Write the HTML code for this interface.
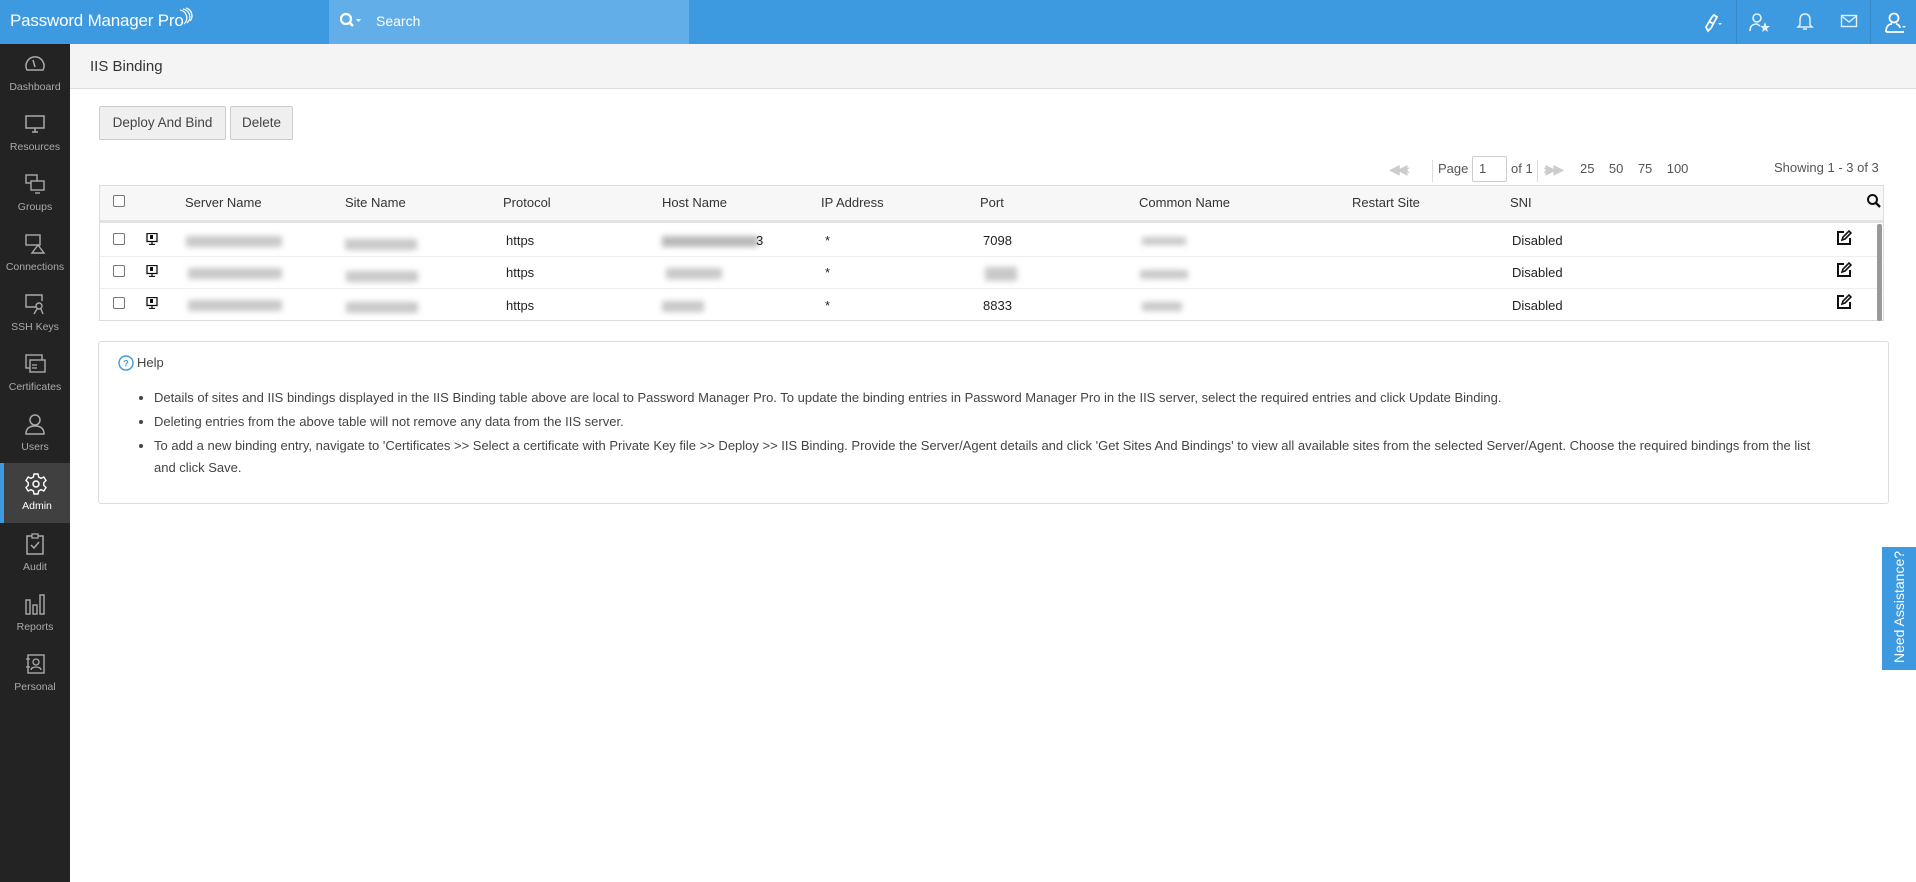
<!DOCTYPE html>
<html><head><meta charset="utf-8"><style>
*{box-sizing:border-box;margin:0;padding:0}
body{width:1916px;height:882px;overflow:hidden;background:#fff;font-family:"Liberation Sans",sans-serif;color:#333;position:relative}
.hdr{position:absolute;left:0;top:0;width:1916px;height:44px;background:#3d99e0}
.logo{position:absolute;left:10px;top:11px;color:#fff;font-size:17px;letter-spacing:-0.2px}
.search{position:absolute;left:329px;top:0;width:360px;height:44px;background:#62aee8;color:#fff;font-size:14px}
.search span{position:absolute;left:47px;top:13px}
.side{position:absolute;left:0;top:44px;width:70px;height:838px;background:#232323}
.item{position:absolute;left:0;width:70px;height:60px;text-align:center;color:#aaa;font-size:10.5px}
.item svg{position:absolute;left:24px;top:9px}
.item .l{position:absolute;left:0;right:0;top:37px}
.item.act{background:#404040;border-left:4px solid #3d99e0;color:#fff}
.item.act svg{left:20px}
.title{position:absolute;left:70px;top:44px;width:1846px;height:45px;background:#f4f4f4;border-bottom:1px solid #ddd;font-size:15px;color:#333}
.title span{position:absolute;left:20px;top:14px}
.btn{position:absolute;top:106px;height:34px;background:#efefef;border:1px solid #ccc;border-radius:2px;font-size:13.5px;color:#444;line-height:32px;text-align:center}
.pg{position:absolute;top:161px;font-size:13px;color:#555}
.th{position:absolute;top:185px;left:99px;width:1785px;height:38px;background:#f7f7f7;border:1px solid #ddd;border-bottom:3px solid #e3e3e3}
.tb{position:absolute;left:99px;top:223px;width:1785px;height:98px;border:1px solid #ddd;border-top:none}
.rl{position:absolute;left:100px;width:1783px;height:1px;background:#eee}
.t{position:absolute;font-size:13px;color:#222;white-space:nowrap}
.h{position:absolute;font-size:13px;color:#333;top:195px}
.cb{position:absolute;width:12px;height:12px;border:1px solid #777;border-radius:2px;background:#fff}
.bl{position:absolute;background:#c8c8c8;filter:blur(3px);height:11px}
.help{position:absolute;left:98px;top:341px;width:1791px;height:163px;border:1px solid #ddd;border-radius:3px}
.help ul{position:absolute;left:55px;top:45px;font-size:13px;color:#444;line-height:22px;white-space:nowrap}
.help li{margin-bottom:2px}
.need{position:absolute;left:1882px;top:547px;width:34px;height:123px;background:#3d99e0}
.need span{position:absolute;left:-44px;top:52px;width:122px;transform:rotate(-90deg);color:#fff;font-size:14px;text-align:center}
.ic{position:absolute;top:11px}
</style></head><body>
<div class="hdr">
<div class="logo">Password Manager Pro<svg width="16" height="20" viewBox="0 0 16 20" style="position:absolute;left:168px;top:-5px"><path d="M2 4 A8 8 0 0 1 6 18" stroke="#fff" fill="none" stroke-width="1.3"/><path d="M5 3 A8 8 0 0 1 9 17" stroke="#fff" fill="none" stroke-width="1.3"/><path d="M8 2 A8 8 0 0 1 12 15" stroke="#fff" fill="none" stroke-width="1.3"/></svg></div>
<div class="search"><svg width="24" height="20" style="position:absolute;left:10px;top:12px"><circle cx="7" cy="7" r="5" stroke="#fff" stroke-width="2.2" fill="none"/><line x1="11" y1="11" x2="14" y2="14" stroke="#fff" stroke-width="2.5"/><path d="M17 7 L22 7 L19.5 10Z" fill="#fff"/></svg><span>Search</span></div>
<div style="position:absolute;left:1736px;top:0;width:1px;height:44px;background:#3689c8"></div>
<div style="position:absolute;left:1870px;top:0;width:1px;height:44px;background:#3689c8"></div>
<svg class="ic" style="left:1700px" width="24" height="24"><path d="M8 20 L6 16 L12 6 L14 4 L17 6 L11 17Z M10 11 L14 13" stroke="#fff" stroke-width="1.8" fill="none"/><path d="M18 12 L22 12 L20 14Z" fill="#fff"/></svg>
<svg class="ic" style="left:1748px" width="24" height="24"><circle cx="9" cy="7" r="4" stroke="#e4f0fa" stroke-width="1.6" fill="none"/><path d="M2 20 C2 14 6 13 9 13 L12 15" stroke="#e4f0fa" stroke-width="1.6" fill="none"/><path d="M17 11 L18.5 15 L22 15 L19 17.5 L20 21 L17 19 L14 21 L15 17.5 L12 15 L15.5 15Z" fill="#e4f0fa"/></svg>
<svg class="ic" style="left:1795px" width="20" height="22"><path d="M10 3 C6 3 5 6 5 9 L5 14 L3 16 L17 16 L15 14 L15 9 C15 6 14 3 10 3Z M8 18 L12 18" stroke="#e4f0fa" stroke-width="1.5" fill="none"/></svg>
<svg class="ic" style="left:1840px;top:14px" width="20" height="16"><rect x="1.5" y="1.5" width="15" height="11" stroke="#e4f0fa" stroke-width="1.4" fill="none"/><path d="M1.5 2 L9 8 L16.5 2" stroke="#e4f0fa" stroke-width="1.4" fill="none"/></svg>
<svg class="ic" style="left:1884px" width="24" height="24"><circle cx="10" cy="7" r="4.5" stroke="#fff" stroke-width="1.8" fill="none"/><path d="M2 21 C2 14 6 13 8 13 M12 13 C14 13 16 15 16 17 M2 21 L20 21" stroke="#fff" stroke-width="1.8" fill="none"/><path d="M18 15 L22 15 L20 17Z" fill="#fff"/></svg>
</div>
<div class="side">
<div class="item" style="top:0"><svg width="22" height="22"><path d="M3 17 A9 9 0 1 1 19 17 Z" stroke="#aaa" stroke-width="1.5" fill="none"/><line x1="11" y1="14" x2="9" y2="7" stroke="#aaa" stroke-width="1.5"/></svg><div class="l">Dashboard</div></div>
<div class="item" style="top:60px"><svg width="22" height="22"><rect x="2" y="3" width="18" height="12" stroke="#aaa" stroke-width="1.5" fill="none"/><path d="M8 19 L14 19 M11 15 L11 19" stroke="#aaa" stroke-width="1.5"/></svg><div class="l">Resources</div></div>
<div class="item" style="top:120px"><svg width="22" height="22"><rect x="2" y="2" width="11" height="8" stroke="#aaa" stroke-width="1.4" fill="none"/><rect x="7" y="8" width="13" height="9" stroke="#aaa" stroke-width="1.4" fill="#232323"/><path d="M11 20 L16 20" stroke="#aaa" stroke-width="1.4"/></svg><div class="l">Groups</div></div>
<div class="item" style="top:180px"><svg width="22" height="22"><rect x="2" y="2" width="14" height="10" stroke="#aaa" stroke-width="1.4" fill="none"/><path d="M8 20 L20 20 L14 12 Z" stroke="#aaa" stroke-width="1.4" fill="none"/></svg><div class="l">Connections</div></div>
<div class="item" style="top:240px"><svg width="22" height="22"><path d="M12 14 L2 14 L2 2 L18 2 L18 8" stroke="#aaa" stroke-width="1.4" fill="none"/><circle cx="15" cy="13" r="3" stroke="#aaa" stroke-width="1.4" fill="none"/><path d="M13 16 L10 21 M17 16 L19 21" stroke="#aaa" stroke-width="1.4"/></svg><div class="l">SSH Keys</div></div>
<div class="item" style="top:300px"><svg width="22" height="22"><rect x="2" y="2" width="16" height="13" stroke="#aaa" stroke-width="1.4" fill="none"/><rect x="6" y="7" width="15" height="12" stroke="#aaa" stroke-width="1.4" fill="#232323"/><path d="M8 12 L13 12 M8 15 L13 15" stroke="#aaa" stroke-width="1.2"/></svg><div class="l">Certificates</div></div>
<div class="item" style="top:360px"><svg width="22" height="22"><circle cx="11" cy="7" r="5" stroke="#aaa" stroke-width="1.5" fill="none"/><path d="M2 21 C2 15 6 13 11 13 C16 13 20 15 20 21 Z" stroke="#aaa" stroke-width="1.5" fill="none"/></svg><div class="l">Users</div></div>
<div class="item act" style="top:419px"><svg width="24" height="24"><circle cx="12" cy="12" r="3" stroke="#fff" stroke-width="1.5" fill="none"/><path d="M10 2 L14 2 L14.6 5 L17 6.3 L19.8 5 L22 8.5 L19.8 10.5 L19.8 13.5 L22 15.5 L19.8 19 L17 17.7 L14.6 19 L14 22 L10 22 L9.4 19 L7 17.7 L4.2 19 L2 15.5 L4.2 13.5 L4.2 10.5 L2 8.5 L4.2 5 L7 6.3 L9.4 5Z" stroke="#fff" stroke-width="1.4" fill="none"/></svg><div class="l">Admin</div></div>
<div class="item" style="top:480px"><svg width="22" height="22"><rect x="3" y="3" width="16" height="18" stroke="#aaa" stroke-width="1.5" fill="none"/><rect x="8" y="1" width="6" height="4" stroke="#aaa" stroke-width="1.3" fill="#232323"/><path d="M7 12 L10 15 L15 9" stroke="#aaa" stroke-width="1.5" fill="none"/></svg><div class="l">Audit</div></div>
<div class="item" style="top:540px"><svg width="22" height="22"><rect x="2" y="7" width="4" height="14" stroke="#aaa" stroke-width="1.4" fill="none"/><rect x="9" y="12" width="4" height="9" stroke="#aaa" stroke-width="1.4" fill="none"/><rect x="16" y="2" width="4" height="19" stroke="#aaa" stroke-width="1.4" fill="none"/></svg><div class="l">Reports</div></div>
<div class="item" style="top:600px"><svg width="22" height="22"><rect x="4" y="2" width="16" height="18" stroke="#aaa" stroke-width="1.4" fill="none"/><circle cx="12" cy="9" r="3" stroke="#aaa" stroke-width="1.3" fill="none"/><path d="M7 17 C7 13 17 13 17 17" stroke="#aaa" stroke-width="1.3" fill="none"/><path d="M2 6 L6 6 M2 14 L6 14" stroke="#aaa" stroke-width="1.3"/></svg><div class="l">Personal</div></div>
</div>
<div class="title"><span>IIS Binding</span></div>
<div class="btn" style="left:99px;width:127px">Deploy And Bind</div>
<div class="btn" style="left:230px;width:63px">Delete</div>

<div class="pg" style="left:1389px;color:#ccc;font-size:14px;letter-spacing:-3px">◀◀ ‹</div>
<div style="position:absolute;left:1432px;top:160px;width:1px;height:22px;background:#ddd"></div>
<div class="pg" style="left:1438px">Page</div>
<div style="position:absolute;left:1472px;top:156px;width:35px;height:26px;border:1px solid #ccc;border-radius:2px;font-size:13px;color:#555;padding:4px 0 0 6px">1</div>
<div class="pg" style="left:1511px">of 1</div>
<div style="position:absolute;left:1537px;top:160px;width:1px;height:22px;background:#ddd"></div>
<div class="pg" style="left:1543px;color:#ccc;font-size:14px;letter-spacing:-3px">› ▶▶</div>
<div class="pg" style="left:1580px">25&nbsp;&nbsp;&nbsp;&nbsp;50&nbsp;&nbsp;&nbsp;&nbsp;75&nbsp;&nbsp;&nbsp;&nbsp;100</div>
<div class="pg" style="left:1774px;top:160px">Showing 1 - 3 of 3</div>

<div class="th"></div>
<div class="tb"></div>
<div class="rl" style="top:256px"></div>
<div class="rl" style="top:288px"></div>
<div style="position:absolute;left:1877px;top:224px;width:5px;height:97px;background:#999;border-radius:2px"></div>
<div class="cb" style="left:113px;top:195px"></div>
<div class="h" style="left:185px">Server Name</div>
<div class="h" style="left:345px">Site Name</div>
<div class="h" style="left:503px">Protocol</div>
<div class="h" style="left:662px">Host Name</div>
<div class="h" style="left:821px">IP Address</div>
<div class="h" style="left:980px">Port</div>
<div class="h" style="left:1139px">Common Name</div>
<div class="h" style="left:1352px">Restart Site</div>
<div class="h" style="left:1510px">SNI</div>
<svg style="position:absolute;left:1866px;top:193px" width="16" height="16"><circle cx="6.5" cy="6.5" r="4.5" stroke="#111" stroke-width="2" fill="none"/><line x1="10" y1="10" x2="14" y2="14" stroke="#111" stroke-width="2.4"/></svg>

<div class="cb" style="left:113px;top:233px"></div>
<div class="cb" style="left:113px;top:265px"></div>
<div class="cb" style="left:113px;top:297px"></div>
<svg style="position:absolute;left:146px;top:233px" width="12" height="12"><rect x="1" y="0.5" width="10" height="8" fill="none" stroke="#111" stroke-width="1.3"/><rect x="4" y="2" width="3" height="4" fill="#111"/><path d="M6 9 L6 11 M3 11.5 L9 11.5" stroke="#111" stroke-width="1.3"/></svg>
<svg style="position:absolute;left:146px;top:265px" width="12" height="12"><rect x="1" y="0.5" width="10" height="8" fill="none" stroke="#111" stroke-width="1.3"/><rect x="4" y="2" width="3" height="4" fill="#111"/><path d="M6 9 L6 11 M3 11.5 L9 11.5" stroke="#111" stroke-width="1.3"/></svg>
<svg style="position:absolute;left:146px;top:297px" width="12" height="12"><rect x="1" y="0.5" width="10" height="8" fill="none" stroke="#111" stroke-width="1.3"/><rect x="4" y="2" width="3" height="4" fill="#111"/><path d="M6 9 L6 11 M3 11.5 L9 11.5" stroke="#111" stroke-width="1.3"/></svg>

<div class="bl" style="left:186px;top:236px;width:96px"></div>
<div class="bl" style="left:188px;top:268px;width:94px"></div>
<div class="bl" style="left:188px;top:300px;width:94px"></div>
<div class="bl" style="left:345px;top:239px;width:72px"></div>
<div class="bl" style="left:346px;top:271px;width:72px"></div>
<div class="bl" style="left:346px;top:302px;width:72px"></div>
<div class="t" style="left:506px;top:233px">https</div>
<div class="t" style="left:506px;top:265px">https</div>
<div class="t" style="left:506px;top:298px">https</div>
<div class="bl" style="left:662px;top:236px;width:96px;background:#b8b8b8"></div><div class="t" style="left:756px;top:233px">3</div>
<div class="bl" style="left:666px;top:268px;width:56px"></div>
<div class="bl" style="left:662px;top:301px;width:42px"></div>
<div class="t" style="left:825px;top:233px">*</div>
<div class="t" style="left:825px;top:265px">*</div>
<div class="t" style="left:825px;top:298px">*</div>
<div class="t" style="left:983px;top:233px">7098</div>
<div class="bl" style="left:985px;top:267px;width:32px;height:14px"></div>
<div class="t" style="left:983px;top:298px">8833</div>
<div class="bl" style="left:1142px;top:237px;width:44px;height:8px"></div>
<div class="bl" style="left:1140px;top:270px;width:48px;height:9px"></div>
<div class="bl" style="left:1142px;top:302px;width:40px;height:9px"></div>
<div class="t" style="left:1512px;top:233px">Disabled</div>
<div class="t" style="left:1512px;top:265px">Disabled</div>
<div class="t" style="left:1512px;top:298px">Disabled</div>
<svg style="position:absolute;left:1835px;top:229px" width="18" height="18"><path d="M9 3 L3 3 L3 15 L15 15 L15 9" stroke="#111" stroke-width="2" fill="none"/><path d="M7 11 L8 8 L14 2 L16 4 L10 10Z" stroke="#111" stroke-width="1.6" fill="none"/></svg>
<svg style="position:absolute;left:1835px;top:261px" width="18" height="18"><path d="M9 3 L3 3 L3 15 L15 15 L15 9" stroke="#111" stroke-width="2" fill="none"/><path d="M7 11 L8 8 L14 2 L16 4 L10 10Z" stroke="#111" stroke-width="1.6" fill="none"/></svg>
<svg style="position:absolute;left:1835px;top:293px" width="18" height="18"><path d="M9 3 L3 3 L3 15 L15 15 L15 9" stroke="#111" stroke-width="2" fill="none"/><path d="M7 11 L8 8 L14 2 L16 4 L10 10Z" stroke="#111" stroke-width="1.6" fill="none"/></svg>

<div class="help">
<svg style="position:absolute;left:19px;top:13px" width="16" height="16"><circle cx="8" cy="8" r="7" stroke="#3d99e0" stroke-width="1.4" fill="none"/><text x="8" y="11.5" font-size="9" font-family="Liberation Sans" font-weight="bold" fill="#3d99e0" text-anchor="middle">?</text></svg>
<div style="position:absolute;left:38px;top:13px;font-size:13px;color:#444">Help</div>
<ul>
<li>Details of sites and IIS bindings displayed in the IIS Binding table above are local to Password Manager Pro. To update the binding entries in Password Manager Pro in the IIS server, select the required entries and click Update Binding.</li>
<li>Deleting entries from the above table will not remove any data from the IIS server.</li>
<li>To add a new binding entry, navigate to 'Certificates &gt;&gt; Select a certificate with Private Key file &gt;&gt; Deploy &gt;&gt; IIS Binding. Provide the Server/Agent details and click 'Get Sites And Bindings' to view all available sites from the selected Server/Agent. Choose the required bindings from the list<br>and click Save.</li>
</ul>
</div>
<div class="need"><span>Need Assistance?</span></div>
</body></html>
